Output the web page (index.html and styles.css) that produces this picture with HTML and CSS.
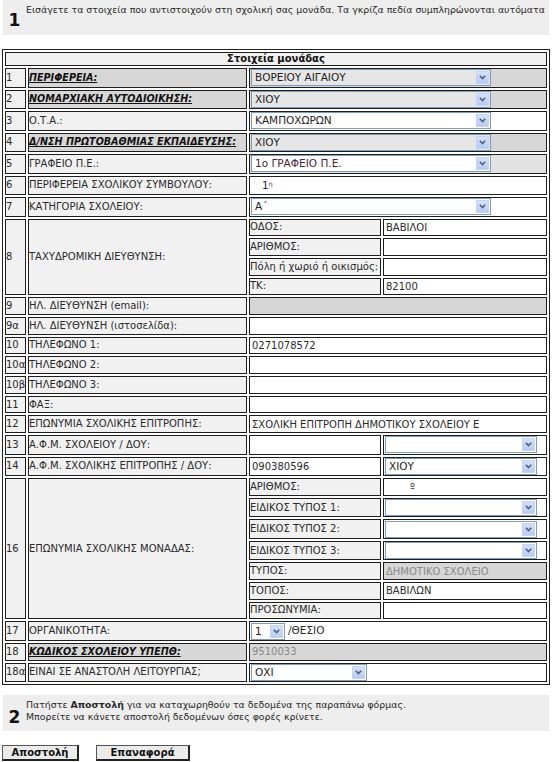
FILE: index.html
```html
<!DOCTYPE html>
<html lang="el">
<head>
<meta charset="utf-8">
<title>Στοιχεία μονάδας</title>
<link rel="stylesheet" href="styles.css">
</head>
<body>
<div class="step">
  <div class="step-num">1</div>
  <div class="step-text">Εισάγετε τα στοιχεία που αντιστοιχούν στη σχολική σας μονάδα. Τα γκρίζα πεδία συμπληρώνονται αυτόματα</div>
</div>

<table class="form">
  <colgroup><col class="c-n"><col class="c-l"><col class="c-sl"><col class="c-sv"></colgroup>
  <tr><th colspan="4" class="head">Στοιχεία μονάδας</th></tr>
  <tr class="key s"><td class="n">1</td><td class="l">ΠΕΡΙΦΕΡΕΙΑ:</td><td class="v" colspan="2"><span class="sel dim w240"><span class="t">ΒΟΡΕΙΟΥ ΑΙΓΑΙΟΥ</span><span class="arr"><svg width="7" height="5" viewBox="0 0 7 5"><path d="M0.8 0.8L3.5 3.5L6.2 0.8" fill="none" stroke="#4d6185" stroke-width="1.6"/></svg></span></span></td></tr>
  <tr class="key s"><td class="n">2</td><td class="l">ΝΟΜΑΡΧΙΑΚΗ ΑΥΤΟΔΙΟΙΚΗΣΗ:</td><td class="v" colspan="2"><span class="sel dim w240"><span class="t">ΧΙΟΥ</span><span class="arr"><svg width="7" height="5" viewBox="0 0 7 5"><path d="M0.8 0.8L3.5 3.5L6.2 0.8" fill="none" stroke="#4d6185" stroke-width="1.6"/></svg></span></span></td></tr>
  <tr class="s"><td class="n">3</td><td class="l">Ο.Τ.Α.:</td><td class="v" colspan="2"><span class="sel w240"><span class="t">ΚΑΜΠΟΧΩΡΩΝ</span><span class="arr"><svg width="7" height="5" viewBox="0 0 7 5"><path d="M0.8 0.8L3.5 3.5L6.2 0.8" fill="none" stroke="#4d6185" stroke-width="1.6"/></svg></span></span></td></tr>
  <tr class="key s"><td class="n">4</td><td class="l">Δ/ΝΣΗ ΠΡΩΤΟΒΑΘΜΙΑΣ ΕΚΠΑΙΔΕΥΣΗΣ:</td><td class="v" colspan="2"><span class="sel dim w240"><span class="t">ΧΙΟΥ</span><span class="arr"><svg width="7" height="5" viewBox="0 0 7 5"><path d="M0.8 0.8L3.5 3.5L6.2 0.8" fill="none" stroke="#4d6185" stroke-width="1.6"/></svg></span></span></td></tr>
  <tr class="s"><td class="n">5</td><td class="l">ΓΡΑΦΕΙΟ Π.Ε.:</td><td class="v grey" colspan="2"><span class="sel w240"><span class="t maroon">1ο ΓΡΑΦΕΙΟ Π.Ε.</span><span class="arr"><svg width="7" height="5" viewBox="0 0 7 5"><path d="M0.8 0.8L3.5 3.5L6.2 0.8" fill="none" stroke="#4d6185" stroke-width="1.6"/></svg></span></span></td></tr>
  <tr class="s"><td class="n">6</td><td class="l">ΠΕΡΙΦΕΡΕΙΑ ΣΧΟΛΙΚΟΥ ΣΥΜΒΟΥΛΟΥ:</td><td class="v" colspan="2"><span class="ord">1<sup>η</sup></span></td></tr>
  <tr class="s"><td class="n">7</td><td class="l">ΚΑΤΗΓΟΡΙΑ ΣΧΟΛΕΙΟΥ:</td><td class="v" colspan="2"><span class="sel w240"><span class="t">Α΄</span><span class="arr"><svg width="7" height="5" viewBox="0 0 7 5"><path d="M0.8 0.8L3.5 3.5L6.2 0.8" fill="none" stroke="#4d6185" stroke-width="1.6"/></svg></span></span></td></tr>
  <tr><td class="n" rowspan="4">8</td><td class="l" rowspan="4">ΤΑΧΥΔΡΟΜΙΚΗ ΔΙΕΥΘΥΝΣΗ:</td><td class="sl">ΟΔΟΣ:</td><td class="sv"><span class="txt">ΒΑΒΙΛΟΙ</span></td></tr>
  <tr><td class="sl">ΑΡΙΘΜΟΣ:</td><td class="sv"></td></tr>
  <tr><td class="sl">Πόλη ή χωριό ή οικισμός:</td><td class="sv"></td></tr>
  <tr><td class="sl">ΤΚ:</td><td class="sv"><span class="txt">82100</span></td></tr>
  <tr><td class="n">9</td><td class="l">ΗΛ. ΔΙΕΥΘΥΝΣΗ (email):</td><td class="v disabled" colspan="2"></td></tr>
  <tr><td class="n">9α</td><td class="l">ΗΛ. ΔΙΕΥΘΥΝΣΗ (ιστοσελίδα):</td><td class="v" colspan="2"></td></tr>
  <tr><td class="n">10</td><td class="l">ΤΗΛΕΦΩΝΟ 1:</td><td class="v" colspan="2"><span class="txt">0271078572</span></td></tr>
  <tr><td class="n">10α</td><td class="l">ΤΗΛΕΦΩΝΟ 2:</td><td class="v" colspan="2"></td></tr>
  <tr><td class="n">10β</td><td class="l">ΤΗΛΕΦΩΝΟ 3:</td><td class="v" colspan="2"></td></tr>
  <tr><td class="n">11</td><td class="l">ΦΑΞ:</td><td class="v" colspan="2"></td></tr>
  <tr><td class="n">12</td><td class="l">ΕΠΩΝΥΜΙΑ ΣΧΟΛΙΚΗΣ ΕΠΙΤΡΟΠΗΣ:</td><td class="v" colspan="2"><span class="txt clip">ΣΧΟΛΙΚΗ ΕΠΙΤΡΟΠΗ ΔΗΜΟΤΙΚΟΥ ΣΧΟΛΕΙΟΥ Ε</span></td></tr>
  <tr class="s"><td class="n">13</td><td class="l">Α.Φ.Μ. ΣΧΟΛΕΙΟΥ / ΔΟΥ:</td><td class="sv"></td><td class="sv"><span class="sel w152"><span class="t"></span><span class="arr"><svg width="7" height="5" viewBox="0 0 7 5"><path d="M0.8 0.8L3.5 3.5L6.2 0.8" fill="none" stroke="#4d6185" stroke-width="1.6"/></svg></span></span></td></tr>
  <tr class="s"><td class="n">14</td><td class="l">Α.Φ.Μ. ΣΧΟΛΙΚΗΣ ΕΠΙΤΡΟΠΗΣ / ΔΟΥ:</td><td class="sv"><span class="txt">090380596</span></td><td class="sv"><span class="sel w152"><span class="t">ΧΙΟΥ</span><span class="arr"><svg width="7" height="5" viewBox="0 0 7 5"><path d="M0.8 0.8L3.5 3.5L6.2 0.8" fill="none" stroke="#4d6185" stroke-width="1.6"/></svg></span></span></td></tr>
  <tr><td class="n" rowspan="7">16</td><td class="l" rowspan="7">ΕΠΩΝΥΜΙΑ ΣΧΟΛΙΚΗΣ ΜΟΝΑΔΑΣ:</td><td class="sl">ΑΡΙΘΜΟΣ:</td><td class="sv"><span class="deg">º</span></td></tr>
  <tr class="s"><td class="sl">ΕΙΔΙΚΟΣ ΤΥΠΟΣ 1:</td><td class="sv"><span class="sel w152"><span class="t"></span><span class="arr"><svg width="7" height="5" viewBox="0 0 7 5"><path d="M0.8 0.8L3.5 3.5L6.2 0.8" fill="none" stroke="#4d6185" stroke-width="1.6"/></svg></span></span></td></tr>
  <tr class="s"><td class="sl">ΕΙΔΙΚΟΣ ΤΥΠΟΣ 2:</td><td class="sv"><span class="sel w152"><span class="t"></span><span class="arr"><svg width="7" height="5" viewBox="0 0 7 5"><path d="M0.8 0.8L3.5 3.5L6.2 0.8" fill="none" stroke="#4d6185" stroke-width="1.6"/></svg></span></span></td></tr>
  <tr class="s"><td class="sl">ΕΙΔΙΚΟΣ ΤΥΠΟΣ 3:</td><td class="sv"><span class="sel w152"><span class="t"></span><span class="arr"><svg width="7" height="5" viewBox="0 0 7 5"><path d="M0.8 0.8L3.5 3.5L6.2 0.8" fill="none" stroke="#4d6185" stroke-width="1.6"/></svg></span></span></td></tr>
  <tr><td class="sl">ΤΥΠΟΣ:</td><td class="sv disabled"><span class="txt dimtext">ΔΗΜΟΤΙΚΟ ΣΧΟΛΕΙΟ</span></td></tr>
  <tr><td class="sl">ΤΟΠΟΣ:</td><td class="sv"><span class="txt">ΒΑΒΙΛΩΝ</span></td></tr>
  <tr><td class="sl">ΠΡΟΣΩΝΥΜΙΑ:</td><td class="sv"></td></tr>
  <tr class="s"><td class="n">17</td><td class="l">ΟΡΓΑΝΙΚΟΤΗΤΑ:</td><td class="v" colspan="2"><span class="sel w34"><span class="t">1</span><span class="arr"><svg width="7" height="5" viewBox="0 0 7 5"><path d="M0.8 0.8L3.5 3.5L6.2 0.8" fill="none" stroke="#4d6185" stroke-width="1.6"/></svg></span></span><span class="after">/ΘΕΣΙΟ</span></td></tr>
  <tr class="key"><td class="n">18</td><td class="l">ΚΩΔΙΚΟΣ ΣΧΟΛΕΙΟΥ ΥΠΕΠΘ:</td><td class="v" colspan="2"><span class="txt dimtext">9510033</span></td></tr>
  <tr class="s"><td class="n">18α</td><td class="l">ΕΙΝΑΙ ΣΕ ΑΝΑΣΤΟΛΗ ΛΕΙΤΟΥΡΓΙΑΣ;</td><td class="v" colspan="2"><span class="sel w116"><span class="t">ΟΧΙ</span><span class="arr"><svg width="7" height="5" viewBox="0 0 7 5"><path d="M0.8 0.8L3.5 3.5L6.2 0.8" fill="none" stroke="#4d6185" stroke-width="1.6"/></svg></span></span></td></tr>
</table>

<div class="step step2">
  <div class="step-num">2</div>
  <div class="step-text">Πατήστε <b>Αποστολή</b> για να καταχωρηθούν τα δεδομένα της παραπάνω φόρμας.<br>Μπορείτε να κάνετε αποστολή δεδομένων όσες φορές κρίνετε.</div>
</div>

<div class="buttons">
  <button class="btn send" type="button">Αποστολή</button>
  <button class="btn reset" type="button">Επαναφορά</button>
</div>
</body>
</html>
```

FILE: styles.css
```css
html, body {
  margin: 0;
  background: #fff;
}
body {
  padding: 0 2px;
  font-family: "DejaVu Sans", Verdana, sans-serif;
  font-size: 10px;
  line-height: 12px;
  color: #2a2a2a;
}

/* step boxes */
.step {
  display: flex;
  align-items: center;
  width: 546px;
  margin-left: 1px;
  height: 35px;
  background: #eeeeee;
  overflow: hidden;
  white-space: nowrap;
  font-size: 9.4px;
}
.step-num {
  width: 23px;
  flex: none;
  text-align: center;
  font-weight: bold;
  font-size: 17px;
  line-height: 18px;
  color: #111;
  padding-top: 5px;
}
.step-text {
  align-self: flex-start;
  padding-top: 4px;
  line-height: 12px;
}
.step2 {
  margin-top: 10px;
  height: 36px;
}
.step2 .step-num { padding-top: 7px; }

/* main form table */
.form {
  margin-top: 14px;
  width: 548px;
  table-layout: fixed;
  border: 1px solid #222;
  border-spacing: 2px;
}
.c-n { width: 21px; }
.c-l { width: 219px; }
.c-sl { width: 132px; }
.c-sv { width: 164px; }

.form td, .form th {
  border: 1px solid #1e1e1e;
  height: 15.7px;
  padding: 0;
  vertical-align: middle;
  white-space: nowrap;
  overflow: hidden;
}
.form tr.s td { height: 17.5px; }
.form .head {
  height: 12px;
  background: #f0f0f0;
  font-weight: bold;
  text-align: center;
  color: #111;
}
.form td.n {
  padding-left: 0;
  background: #f1f1f1;
}
.form td.l {
  padding-left: 0;
  background: #f1f1f1;
}
.form td.v, .form td.sv {
  background: #fff;
  font-size: 10.5px;
}
.form td.sl {
  background: #f1f1f1;
}
.form td.v.grey { background: #e2e2e2; }
.form td.disabled { background: #d6d6d6; }
.form tr.key td.l {
  background: #d7d7d7;
  font-size: 9.6px;
  font-weight: bold;
  font-style: italic;
  text-decoration: underline;
  color: #111;
}
.form tr.key td.v { background: #d7d7d7; }

/* select look-alike */
.sel {
  display: inline-flex;
  vertical-align: middle;
  margin-left: 1px;
  border: 1px solid #7f9db9;
  background: #fff;
  box-sizing: border-box;
  height: 17px;
}
.sel.dim { background: #e6e6e6; }
.sel .t {
  flex: 1;
  padding-left: 3px;
  line-height: 15px;
  color: #222;
  overflow: hidden;
  white-space: nowrap;
}
.sel .t.maroon { color: #4a2438; }
.sel .arr {
  flex: none;
  width: 13px;
  height: 13px;
  margin: 1px;
  display: flex;
  align-items: center;
  justify-content: center;
  background: linear-gradient(#d4e0fb, #b9cbf3);
  border: 1px solid #c6d4f4;
  box-sizing: border-box;
}
.w240 { width: 240px; }
.w152 { width: 152px; }
.w116 { width: 116px; }
.w34 { width: 34px; }

.txt {
  display: inline-block;
  padding-left: 2px;
  white-space: nowrap;
  font-size: 10px;
}
.txt.clip {
  width: 229px;
  overflow: hidden;
  vertical-align: middle;
}
.dimtext { color: #8a8a8a; }
.ord {
  padding-left: 12px;
}
.ord sup {
  font-size: 6px;
  vertical-align: 3px;
  line-height: 0;
}
.deg {
  padding-left: 26px;
}
.after {
  padding-left: 3px;
}

/* buttons */
.buttons {
  margin-top: 14px;
  display: flex;
  gap: 17px;
}
.btn {
  font-family: "DejaVu Sans", Verdana, sans-serif;
  font-size: 10px;
  font-weight: bold;
  line-height: 12px;
  height: 16px;
  padding: 0;
  background: #ebebeb;
  color: #111;
  border: 1px solid #555;
  border-right: 2px solid #222;
  border-bottom: 2px solid #222;
}
.btn.send { width: 77px; }
.btn.reset { width: 94px; }
```
